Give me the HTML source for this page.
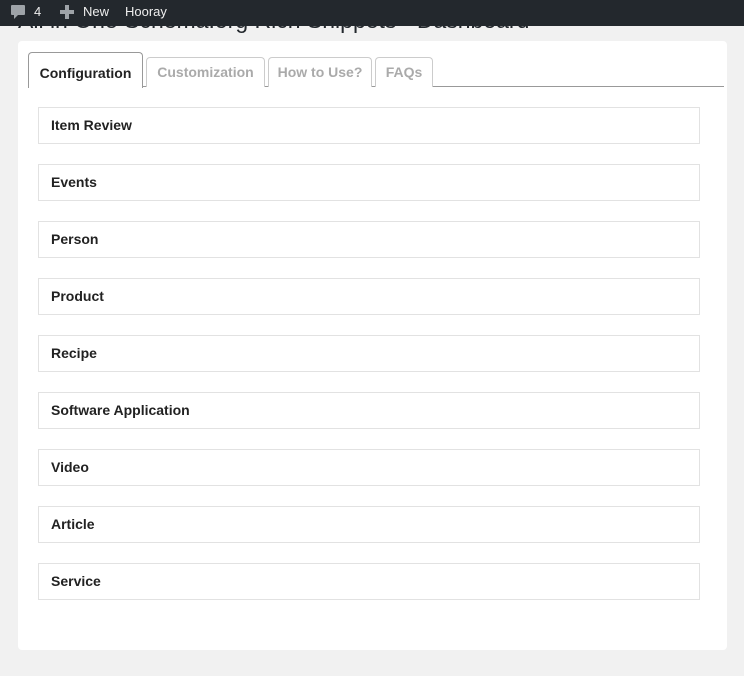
<!DOCTYPE html>
<html><head><style>
body{margin:0;background:#f1f1f1;font-family:"Liberation Sans",sans-serif;width:744px;height:676px;overflow:hidden;position:relative}
#bar{position:absolute;left:0;top:0;width:744px;height:26px;background:#23282d;color:#eee;font-size:13px;z-index:2}
#bar span{position:absolute;top:4px}
h1{position:absolute;left:18px;top:7px;margin:0;font-weight:400;font-size:23px;color:#23282d;white-space:nowrap}
#card{position:absolute;left:18px;top:41px;width:709px;height:609px;background:#fff;border-radius:4px}
.tabline{position:absolute;left:10px;top:45px;width:696px;height:1px;background:#999}
.tab{position:absolute;box-sizing:border-box;border:1px solid #ccc;border-bottom:none;border-radius:4px 4px 0 0;font-weight:bold;font-size:14px;color:#aaa;background:#fff;text-align:center}
.tab.act{border-color:#999;color:#222;background:#fff;z-index:1}
.item{position:absolute;left:20px;width:662px;height:37px;box-sizing:border-box;border:1px solid #e2e2e2;font-weight:bold;font-size:14px;color:#222;padding:9px 0 0 12px}
</style></head><body>
<div id="bar">
<svg style="position:absolute;left:11px;top:5px" width="14" height="15" viewBox="0 0 14 15"><path d="M1 0h12a1 1 0 0 1 1 1v8a1 1 0 0 1-1 1H7l-4 4v-4H1a1 1 0 0 1-1-1V1a1 1 0 0 1 1-1z" fill="#9ea3a8"/></svg>
<span style="left:34px">4</span>
<svg style="position:absolute;left:60px;top:5px" width="14" height="14"><path d="M5 0h4v5h5v4H9v5H5V9H0V5h5z" fill="#9ea3a8"/></svg>
<span style="left:83px">New</span>
<span style="left:125px">Hooray</span>
</div>
<h1>All in One Schema.org Rich Snippets - Dashboard</h1>
<div id="card">
<div class="tabline"></div>
<div class="tab act" style="left:10px;top:11px;width:115px;height:36px;line-height:40px">Configuration</div>
<div class="tab" style="left:128px;top:16px;width:119px;height:30px;line-height:29px">Customization</div>
<div class="tab" style="left:250px;top:16px;width:104px;height:30px;line-height:29px">How to Use?</div>
<div class="tab" style="left:357px;top:16px;width:58px;height:30px;line-height:29px">FAQs</div>
<div class="item" style="top:66px">Item Review</div>
<div class="item" style="top:123px">Events</div>
<div class="item" style="top:180px">Person</div>
<div class="item" style="top:237px">Product</div>
<div class="item" style="top:294px">Recipe</div>
<div class="item" style="top:351px">Software Application</div>
<div class="item" style="top:408px">Video</div>
<div class="item" style="top:465px">Article</div>
<div class="item" style="top:522px">Service</div>
</div>
</body></html>
